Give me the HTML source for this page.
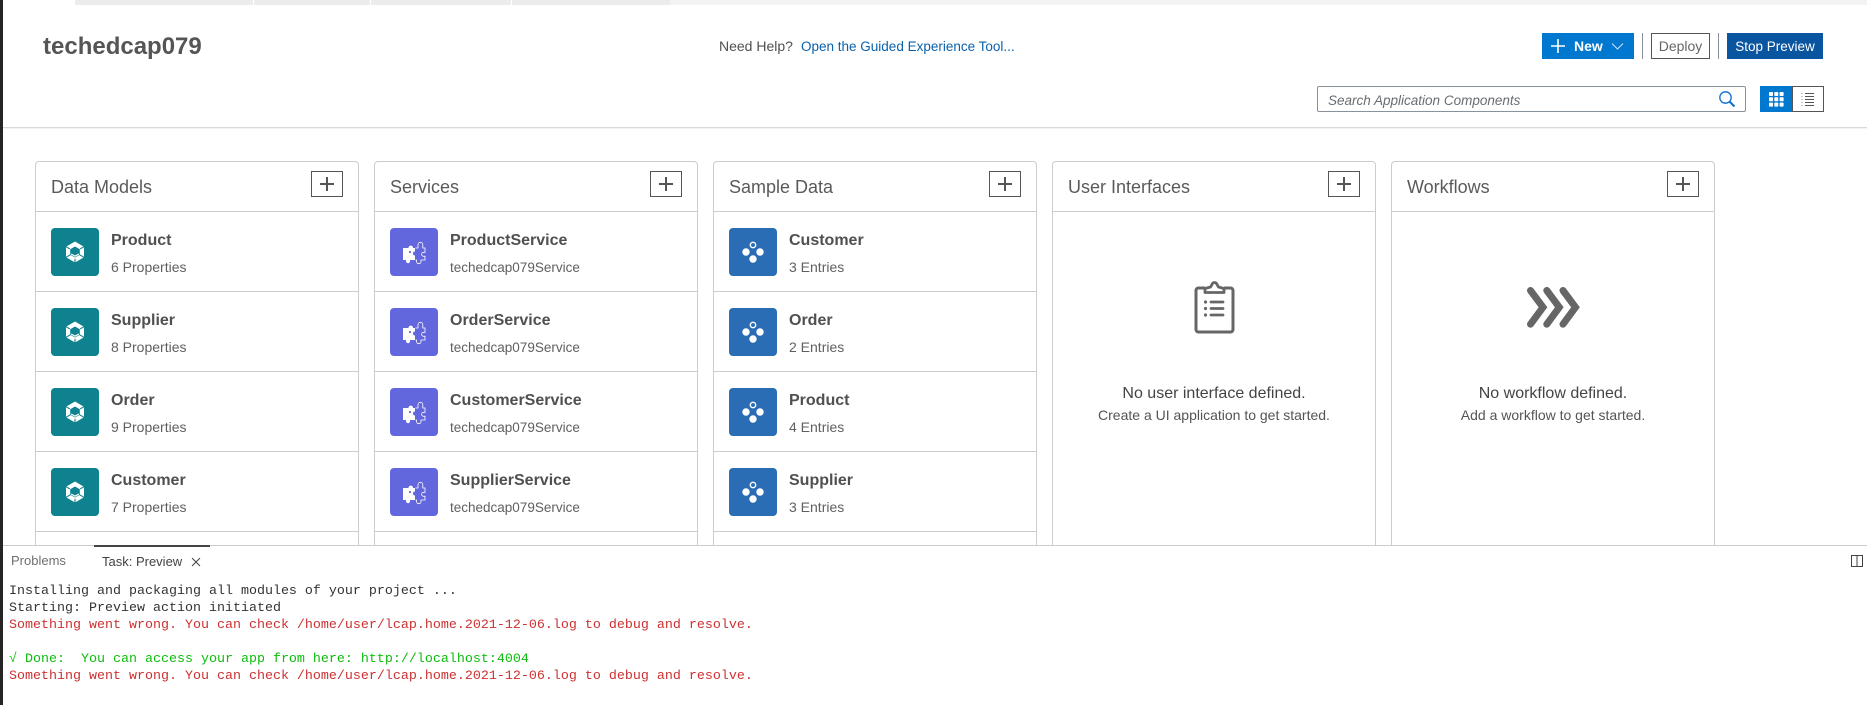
<!DOCTYPE html>
<html lang="en">
<head>
<meta charset="utf-8">
<title>techedcap079</title>
<style>
html,body{margin:0;padding:0;background:#fff;}
body{position:relative;width:1867px;height:705px;overflow:hidden;font-family:"Liberation Sans",Arial,sans-serif;color:#4a4a4a;}
.a{position:absolute;white-space:nowrap;}
.card{position:absolute;top:161px;width:324px;height:440px;box-sizing:border-box;border:1px solid #ccc;border-radius:4px;background:#fff;}
.card .hl{position:absolute;left:0;right:0;top:49px;height:1px;background:#ccc;}
.card .h{position:absolute;left:15px;top:13px;font-size:18px;line-height:24px;color:#5a5a5a;white-space:nowrap;}
.plus{position:absolute;left:275px;top:9px;width:32px;height:26px;box-sizing:border-box;border:1px solid #555;background:#fff;}
.plus:before{content:"";position:absolute;left:8px;top:11px;width:14px;height:2px;background:#555;}
.plus:after{content:"";position:absolute;left:14px;top:5px;width:2px;height:14px;background:#555;}
.row{position:absolute;left:0;right:0;height:79px;border-bottom:1px solid #ccc;box-sizing:content-box;}
.ic{position:absolute;left:15px;top:16px;width:48px;height:48px;border-radius:4px;}
.t{position:absolute;left:75px;top:19px;font-size:16px;line-height:20px;font-weight:bold;color:#505050;white-space:nowrap;}
.s{position:absolute;left:75px;top:45px;font-size:14px;line-height:20px;color:#606060;white-space:nowrap;}
.s.n{font-size:13.500px;top:46px;}
.teal{background:#0f828f;}.pur{background:#6367de;}.blu{background:#2a6db5;}
.c{position:absolute;text-align:center;left:0;right:0;white-space:nowrap;}
#panel{position:absolute;left:3px;top:545px;right:0;bottom:0;background:#fff;border-top:1px solid #ccc;}
.m{position:absolute;left:9px;font-family:"Liberation Mono",monospace;font-size:13.33px;line-height:17px;white-space:pre;color:#333;}
.r{color:#cd3131;}.g{color:#0dbc0d;}
</style>
</head>
<body>
<svg width="0" height="0" style="position:absolute">
<defs>
<symbol id="cube" viewBox="0 0 48 48">
<path fill="#fff" d="M24 13.500l9 5.200v10.600l-9 5.200-9-5.200V18.700z"/>
<path fill="#0f828f" d="M24 18.500l4.800 2.800v5.400L24 29.500l-4.800-2.800v-5.400z"/>
<path fill="none" stroke="#0f828f" stroke-width="1.100" d="M15 18.700l3.800 2.200M33 18.700l-3.800 2.200M15 29.300l4.500-2.600M33 29.300l-4.500-2.600M24 34.500v-3.800"/>
<path fill="none" stroke="#fff" stroke-width="1.200" d="M20.200 26l3.800 2.200 3.800-2.200"/>
</symbol>
<symbol id="puzzle" viewBox="0 0 48 48">
<path fill="#fff" d="M13 20h5.500v-.5a2.300 2.300 0 0 1 4.500 0V20h2v3.500a2 2 0 0 0 0 4V32h-5v1.200a2.200 2.200 0 0 1-1.500 2v-.2a2 2 0 0 1-2.500-1.800V32H13z"/>
<path fill="none" stroke="#fff" stroke-width=".8" d="M25.500 20h2.500v-3.300a2.400 2.400 0 0 1 4.800 0V20H35v4.300h-1.400a2 2 0 0 0 0 4H35V32h-4v1.500a2.200 2.200 0 0 1-4.400 0V32h-1.100"/>
<circle cx="20" cy="24" r="1.100" fill="#6367de"/>
</symbol>
<symbol id="dots" viewBox="0 0 48 48">
<circle cx="24" cy="17" r="2.700" fill="none" stroke="#fff" stroke-width="1.400"/>
<circle cx="17" cy="24" r="3.700" fill="#fff"/>
<circle cx="31" cy="24" r="3.700" fill="#fff"/>
<circle cx="24" cy="31" r="3.700" fill="#fff"/>
</symbol>
</defs>
</svg>

<!-- left bar -->
<div class="a" style="left:0;top:0;width:3px;height:705px;background:#252526;z-index:5"></div>

<!-- top strip -->
<div class="a" style="left:3px;top:0;width:1864px;height:5px;background:#f3f3f3"></div>
<div class="a" style="left:3px;top:0;width:72px;height:5px;background:#fff"></div>
<div class="a" style="left:75px;top:0;width:595px;height:5px;background:#ececec"></div>
<div class="a" style="left:253px;top:0;width:1px;height:5px;background:#fff"></div>
<div class="a" style="left:370px;top:0;width:1px;height:5px;background:#fff"></div>
<div class="a" style="left:511px;top:0;width:1px;height:5px;background:#fff"></div>

<!-- header -->
<div class="a" style="left:43px;top:32px;font-size:24px;line-height:30px;font-weight:bold;color:#555">techedcap079</div>
<div class="a" style="left:719px;top:36px;font-size:14px;line-height:20px;color:#505050">Need Help?</div>
<div class="a" style="left:801px;top:37px;font-size:13.500px;line-height:20px;color:#0a62ad">Open the Guided Experience Tool...</div>

<div class="a" style="left:1542px;top:33px;width:92px;height:26px;background:#0078d0"></div>
<svg class="a" style="left:1550px;top:38px" width="16" height="16" viewBox="0 0 16 16"><path d="M8 1v14M1 8h14" stroke="#fff" stroke-width="1.600"/></svg>
<div class="a" style="left:1574px;top:36px;font-size:14px;line-height:20px;font-weight:bold;color:#fff">New</div>
<svg class="a" style="left:1611px;top:42px" width="13" height="9" viewBox="0 0 13 9"><path d="M1 1.500l5.500 5.500L12 1.500" fill="none" stroke="#cfe6f7" stroke-width="1"/></svg>
<div class="a" style="left:1642px;top:33px;width:1px;height:26px;background:#89919a"></div>
<div class="a" style="left:1651px;top:33px;width:59px;height:26px;box-sizing:border-box;border:1px solid #555;background:#fff;text-align:center;font-size:14px;line-height:24px;color:#666">Deploy</div>
<div class="a" style="left:1718px;top:33px;width:1px;height:26px;background:#89919a"></div>
<div class="a" style="left:1727px;top:33px;width:96px;height:26px;background:#0a55a0;text-align:center;font-size:13.500px;line-height:28px;color:#fff">Stop Preview</div>

<div class="a" style="left:1317px;top:86px;width:429px;height:26px;box-sizing:border-box;border:1px solid #89919a;border-radius:2px;background:#fff"></div>
<div class="a" style="left:1328px;top:91px;font-size:13.500px;line-height:20px;font-style:italic;color:#6a6d70">Search Application Components</div>
<svg class="a" style="left:1718px;top:90px" width="18" height="18" viewBox="0 0 18 18"><circle cx="7.500" cy="7.500" r="5.700" fill="none" stroke="#0a6ed1" stroke-width="1.300"/><path d="M11.500 11.500l5 5" stroke="#0a6ed1" stroke-width="2"/></svg>

<div class="a" style="left:1760px;top:86px;width:33px;height:26px;background:#0078d0"></div>
<svg class="a" style="left:1769px;top:92px" width="15" height="15" viewBox="0 0 15 15" fill="#fff"><rect x="0" y="0" width="4" height="4" rx=".7"/><rect x="5.300" y="0" width="4" height="4" rx=".7"/><rect x="10.600" y="0" width="4" height="4" rx=".7"/><rect x="0" y="5.300" width="4" height="4" rx=".7"/><rect x="5.300" y="5.300" width="4" height="4" rx=".7"/><rect x="10.600" y="5.300" width="4" height="4" rx=".7"/><rect x="0" y="10.600" width="4" height="4" rx=".7"/><rect x="5.300" y="10.600" width="4" height="4" rx=".7"/><rect x="10.600" y="10.600" width="4" height="4" rx=".7"/></svg>
<div class="a" style="left:1792px;top:86px;width:32px;height:26px;box-sizing:border-box;border:1px solid #555;background:#fff"></div>
<svg class="a" style="left:1801px;top:92px" width="14" height="15" viewBox="0 0 14 15"><path d="M4 1.500h9M4 4.500h9M4 7.500h9M4 10.500h9M4 13.500h9" stroke="#555" stroke-width="1.100"/><path d="M0.500 1.500h1M0.500 4.500h1M0.500 7.500h1M0.500 10.500h1M0.500 13.500h1" stroke="#888" stroke-width="1.100"/></svg>

<div class="a" style="left:3px;top:127px;width:1864px;height:1px;background:#d9d9d9;box-shadow:0 1px 1px #eee"></div>

<!-- Data Models -->
<div class="card" style="left:35px">
<div class="h">Data Models</div><div class="plus"></div><div class="hl"></div>
<div class="row" style="top:50px"><svg class="ic teal" viewBox="0 0 48 48"><use href="#cube"/></svg><div class="t">Product</div><div class="s">6 Properties</div></div>
<div class="row" style="top:130px"><svg class="ic teal" viewBox="0 0 48 48"><use href="#cube"/></svg><div class="t">Supplier</div><div class="s">8 Properties</div></div>
<div class="row" style="top:210px"><svg class="ic teal" viewBox="0 0 48 48"><use href="#cube"/></svg><div class="t">Order</div><div class="s">9 Properties</div></div>
<div class="row" style="top:290px"><svg class="ic teal" viewBox="0 0 48 48"><use href="#cube"/></svg><div class="t">Customer</div><div class="s">7 Properties</div></div>
</div>

<!-- Services -->
<div class="card" style="left:374px">
<div class="h">Services</div><div class="plus"></div><div class="hl"></div>
<div class="row" style="top:50px"><svg class="ic pur" viewBox="0 0 48 48"><use href="#puzzle"/></svg><div class="t">ProductService</div><div class="s n">techedcap079Service</div></div>
<div class="row" style="top:130px"><svg class="ic pur" viewBox="0 0 48 48"><use href="#puzzle"/></svg><div class="t">OrderService</div><div class="s n">techedcap079Service</div></div>
<div class="row" style="top:210px"><svg class="ic pur" viewBox="0 0 48 48"><use href="#puzzle"/></svg><div class="t">CustomerService</div><div class="s n">techedcap079Service</div></div>
<div class="row" style="top:290px"><svg class="ic pur" viewBox="0 0 48 48"><use href="#puzzle"/></svg><div class="t">SupplierService</div><div class="s n">techedcap079Service</div></div>
</div>

<!-- Sample Data -->
<div class="card" style="left:713px">
<div class="h">Sample Data</div><div class="plus"></div><div class="hl"></div>
<div class="row" style="top:50px"><svg class="ic blu" viewBox="0 0 48 48"><use href="#dots"/></svg><div class="t">Customer</div><div class="s">3 Entries</div></div>
<div class="row" style="top:130px"><svg class="ic blu" viewBox="0 0 48 48"><use href="#dots"/></svg><div class="t">Order</div><div class="s">2 Entries</div></div>
<div class="row" style="top:210px"><svg class="ic blu" viewBox="0 0 48 48"><use href="#dots"/></svg><div class="t">Product</div><div class="s">4 Entries</div></div>
<div class="row" style="top:290px"><svg class="ic blu" viewBox="0 0 48 48"><use href="#dots"/></svg><div class="t">Supplier</div><div class="s">3 Entries</div></div>
</div>

<!-- User Interfaces -->
<div class="card" style="left:1052px">
<div class="h">User Interfaces</div><div class="plus"></div><div class="hl"></div>
<svg class="a" style="left:141px;top:119px" width="42" height="54" viewBox="0 0 42 54">
<path d="M11 7H4.500A2.500 2.500 0 0 0 2 9.500v39A2.500 2.500 0 0 0 4.500 51h32a2.500 2.500 0 0 0 2.500-2.500v-39A2.500 2.500 0 0 0 36.500 7H30" fill="none" stroke="#666" stroke-width="3"/>
<path d="M11 7.500l5.500-1.500 2-3.500a2.500 2.500 0 0 1 4 0l2 3.500 5.500 1.500v4H11z" fill="none" stroke="#666" stroke-width="2.800" stroke-linejoin="round"/>
<path d="M17 21h12M17 27.500h12M17 34h12" stroke="#666" stroke-width="2.800" stroke-linecap="round"/>
<circle cx="11.500" cy="21" r="1.600" fill="#666"/><circle cx="11.500" cy="27.500" r="1.600" fill="#666"/><circle cx="11.500" cy="34" r="1.600" fill="#666"/>
</svg>
<div class="c" style="top:222px;font-size:16px;line-height:20px;color:#444">No user interface defined.</div>
<div class="c" style="top:243px;font-size:14px;line-height:20px;color:#555">Create a UI application to get started.</div>
</div>

<!-- Workflows -->
<div class="card" style="left:1391px">
<div class="h">Workflows</div><div class="plus"></div><div class="hl"></div>
<svg class="a" style="left:134px;top:124px" width="56" height="44" viewBox="0 0 56 44">
<path d="M4.500 4.500L17 21.300 4.500 38.200M20.800 4.500L33.300 21.300 20.800 38.200M37 4.500L49.500 21.300 37 38.200" fill="none" stroke="#666" stroke-width="7" stroke-linecap="round" stroke-linejoin="miter"/>
</svg>
<div class="c" style="top:222px;font-size:16px;line-height:20px;color:#444">No workflow defined.</div>
<div class="c" style="top:243px;font-size:14px;line-height:20px;color:#555">Add a workflow to get started.</div>
</div>

<!-- bottom panel -->
<div id="panel"></div>
<div class="a" style="left:94px;top:545px;width:116px;height:2px;background:#444"></div>
<div class="a" style="left:11px;top:551px;font-size:13px;line-height:20px;color:#6f6f6f">Problems</div>
<div class="a" style="left:102px;top:552px;font-size:13px;line-height:20px;color:#424242">Task: Preview</div>
<svg class="a" style="left:191px;top:557px" width="10" height="10" viewBox="0 0 10 10"><path d="M1 1l8 8M9 1l-8 8" stroke="#424242" stroke-width="1"/></svg>
<svg class="a" style="left:1851px;top:555px" width="12" height="12" viewBox="0 0 12 12"><path d="M.5 .5h11v11H.5zM6 .5v11" fill="none" stroke="#424242" stroke-width="1"/></svg>

<div class="m" style="top:583px">Installing and packaging all modules of your project ...</div>
<div class="m" style="top:600px">Starting: Preview action initiated</div>
<div class="m r" style="top:617px">Something went wrong. You can check /home/user/lcap.home.2021-12-06.log to debug and resolve.</div>
<div class="m g" style="top:651px">√ Done:  You can access your app from here: http://localhost:4004</div>
<div class="m r" style="top:668px">Something went wrong. You can check /home/user/lcap.home.2021-12-06.log to debug and resolve.</div>
</body>
</html>
